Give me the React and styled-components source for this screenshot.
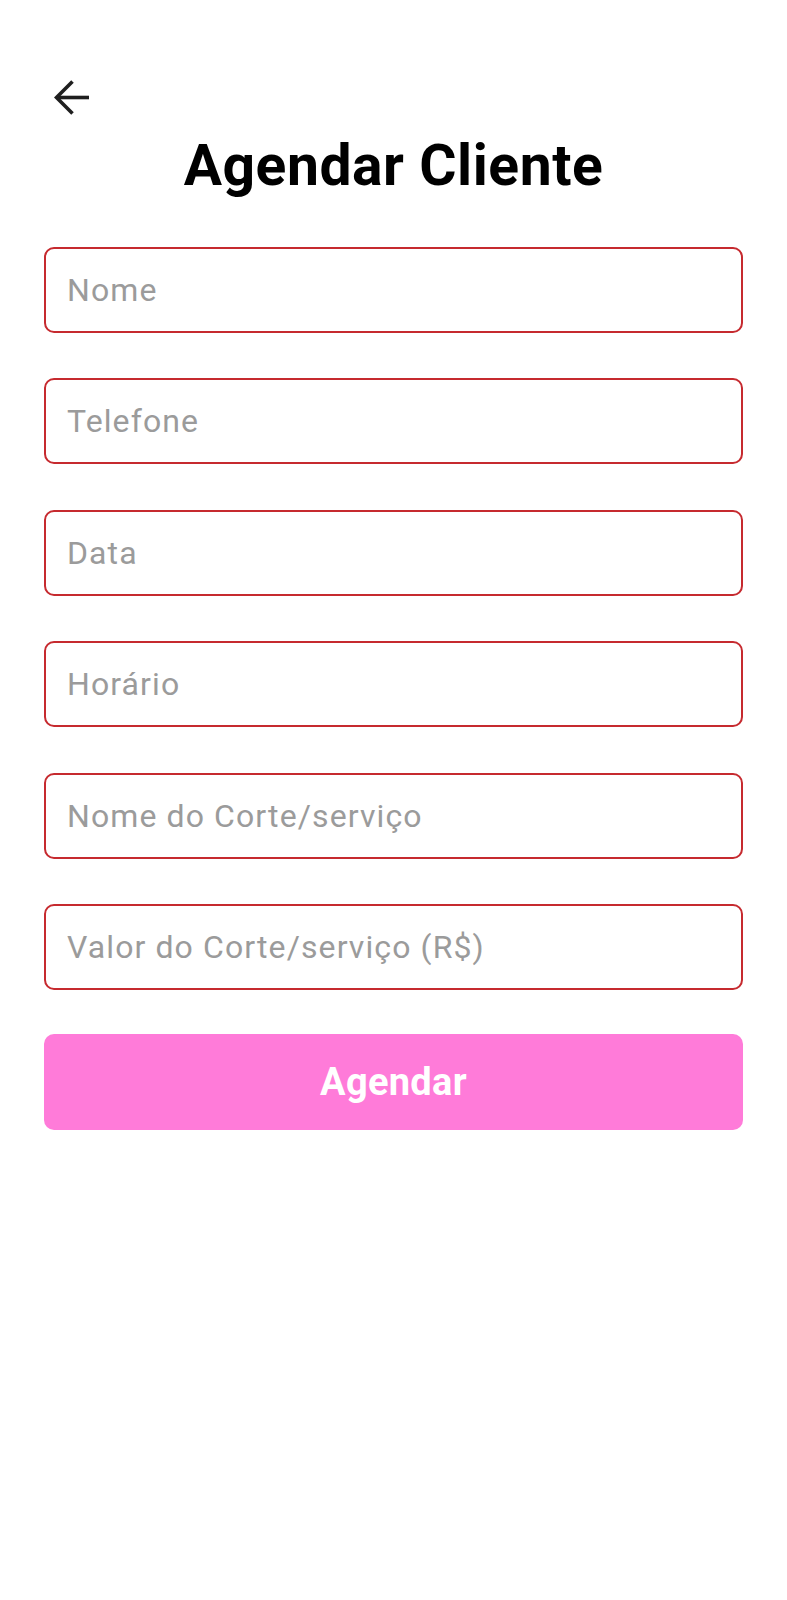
import React from 'react';
import styled, { createGlobalStyle } from 'styled-components';

//============ global
const GlobalStyle = createGlobalStyle`
  html, body {
    margin: 0;
    padding: 0;
    background: #fff;
  }
  body {
    font-family: Roboto, "Liberation Sans", Arial, sans-serif;
  }
  * {
    box-sizing: border-box;
  }
`;

//============ styled components
const Screen = styled.div`
  min-height: 1600px;
  padding: 80px 44px 0 44px;
  display: flex;
  flex-direction: column;
`;
const BackButton = styled.button`
  width: 36px;
  height: 36px;
  margin-left: 10px;
  padding: 0;
  border: none;
  background: transparent;
  display: flex;
  cursor: pointer;
`;
const Title = styled.h1`
  margin: 16px 0 0 0;
  font-size: 57px;
  line-height: 68px;
  letter-spacing: 0.55px;
  font-weight: 700;
  color: #000;
  text-align: center;
`;
const Form = styled.form`
  margin-top: 47px;
  display: flex;
  flex-direction: column;
  gap: 45.4px;
`;
const Field = styled.input`
  width: 100%;
  height: 86px;
  padding: 0 21px;
  border: 2px solid #c62a2f;
  border-radius: 10px;
  font-family: Roboto, "Liberation Sans", Arial, sans-serif;
  font-size: 32px;
  letter-spacing: 1.1px;
  color: #222;
  background: #fff;
  outline: none;
  &::placeholder {
    color: #9b9b9b;
  }
`;
const Submit = styled.button`
  margin-top: -1.4px;
  height: 96px;
  border: none;
  border-radius: 10px;
  background: #ff7bd9;
  color: #fff;
  font-family: Roboto, "Liberation Sans", Arial, sans-serif;
  font-size: 38px;
  letter-spacing: 0.3px;
  font-weight: 700;
  cursor: pointer;
`;

const fields = [
  'Nome',
  'Telefone',
  'Data',
  'Horário',
  'Nome do Corte/serviço',
  'Valor do Corte/serviço (R$)'
];

const BackArrow = () => (
  <svg width="36" height="36" viewBox="0 0 36 36" fill="none">
    <path d="M35 17.5H3" stroke="#1f1f1f" strokeWidth="3.6" />
    <path d="M18.5 1.5L2.5 17.5L18.5 33.5" stroke="#1f1f1f" strokeWidth="3.6" strokeLinejoin="miter" />
  </svg>
);

export default function App() {
  return (
    <Screen>
      <GlobalStyle />
      <BackButton type="button" aria-label="Voltar">
        <BackArrow />
      </BackButton>
      <Title>Agendar Cliente</Title>
      <Form onSubmit={e => e.preventDefault()}>
        {fields.map(f => (
          <Field key={f} placeholder={f} />
        ))}
        <Submit type="submit">Agendar</Submit>
      </Form>
    </Screen>
  );
}
